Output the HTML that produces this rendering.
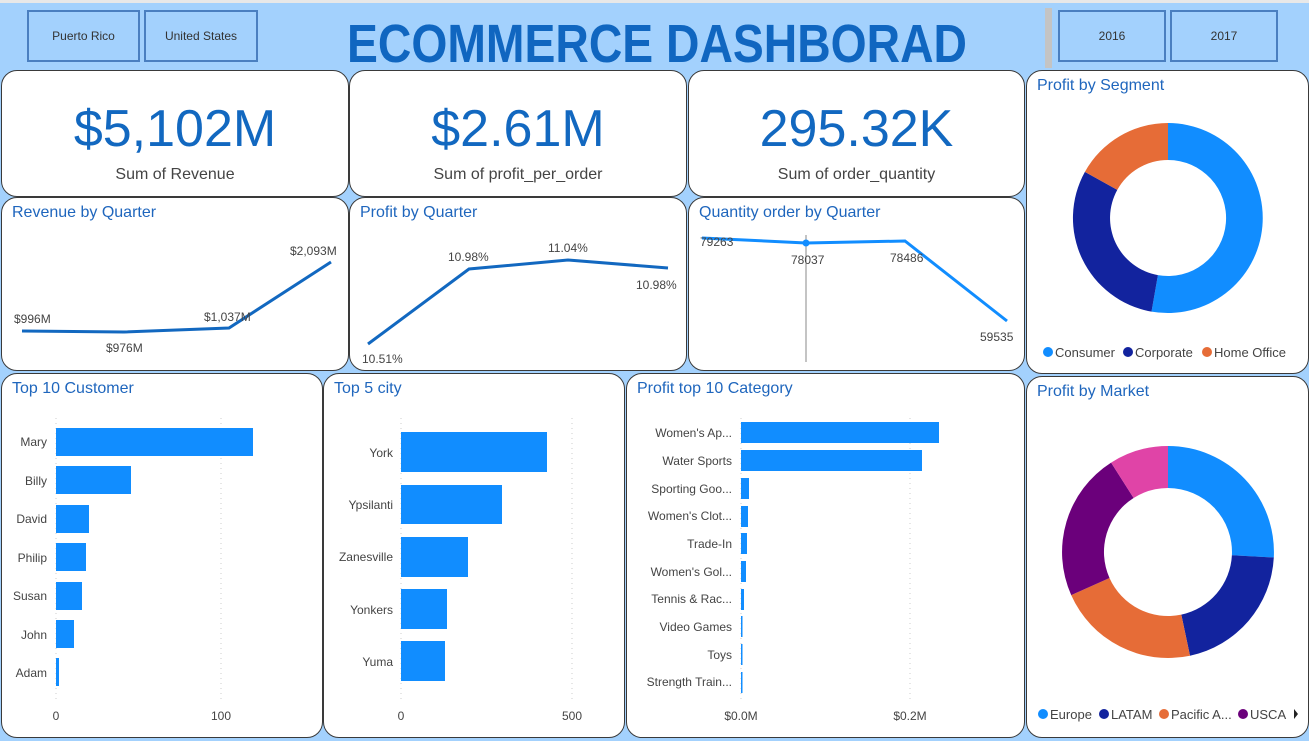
<!DOCTYPE html>
<html><head><meta charset="utf-8"><style>
*{margin:0;padding:0;box-sizing:border-box}
body{width:1309px;height:741px;background:#a3d1fd;font-family:"Liberation Sans",sans-serif;position:relative;overflow:hidden}
.c{position:absolute;background:#fff;border:1px solid #3a3a3a;border-radius:16px}
.sl{position:absolute;border:2px solid #4a7fc0;font-size:12px;color:#333;display:flex;align-items:center;justify-content:center}
.t{position:absolute;font-size:16px;color:#1f66bd;left:10px;top:6px}
.big{position:absolute;width:100%;text-align:center;font-size:52px;color:#1268c0;top:28px}
.lab{position:absolute;width:100%;text-align:center;font-size:16px;color:#444;top:95px}
svg{position:absolute;left:0;top:0}
</style></head><body>
<div style="position:absolute;left:0;top:0;width:1309px;height:3px;background:#e8e8e8"></div>
<div class="sl" style="left:27px;top:10px;width:113px;height:52px">Puerto Rico</div>
<div class="sl" style="left:144px;top:10px;width:114px;height:52px">United States</div>
<div style="position:absolute;left:1045px;top:8px;width:7px;height:60px;background:#c4c4c4"></div>
<div class="sl" style="left:1058px;top:10px;width:108px;height:52px">2016</div>
<div class="sl" style="left:1170px;top:10px;width:108px;height:52px">2017</div>
<svg width="1309" height="741" style="z-index:0">
<text x="657" y="62" text-anchor="middle" font-size="54" font-weight="bold" fill="#1066c0" textLength="620" lengthAdjust="spacingAndGlyphs" font-family="Liberation Sans">ECOMMERCE DASHBORAD</text>
</svg>

<div class="c" style="left:1px;top:70px;width:348px;height:127px"><div class="big">$5,102M</div><div class="lab">Sum of Revenue</div></div>
<div class="c" style="left:349px;top:70px;width:338px;height:127px"><div class="big">$2.61M</div><div class="lab">Sum of profit_per_order</div></div>
<div class="c" style="left:688px;top:70px;width:337px;height:127px"><div class="big">295.32K</div><div class="lab">Sum of order_quantity</div></div>

<div class="c" style="left:1px;top:197px;width:348px;height:174px"><div class="t">Revenue by Quarter</div></div>
<div class="c" style="left:349px;top:197px;width:338px;height:174px"><div class="t">Profit by Quarter</div></div>
<div class="c" style="left:688px;top:197px;width:337px;height:174px"><div class="t">Quantity order by Quarter</div></div>
<div class="c" style="left:1026px;top:70px;width:283px;height:304px"><div class="t">Profit by Segment</div></div>

<div class="c" style="left:1px;top:373px;width:322px;height:365px"><div class="t">Top 10 Customer</div></div>
<div class="c" style="left:323px;top:373px;width:302px;height:365px"><div class="t">Top 5 city</div></div>
<div class="c" style="left:626px;top:373px;width:399px;height:365px"><div class="t">Profit top 10 Category</div></div>
<div class="c" style="left:1026px;top:376px;width:283px;height:362px"><div class="t">Profit by Market</div></div>

<svg width="1309" height="741" font-family="Liberation Sans" font-size="12" fill="#444">
<!-- revenue -->
<polyline points="22,331 124,332 229,328 331,262" fill="none" stroke="#1268c0" stroke-width="3"/>
<text x="14" y="323">$996M</text><text x="106" y="352">$976M</text><text x="204" y="321">$1,037M</text><text x="290" y="255">$2,093M</text>
<!-- profit -->
<polyline points="368,344 469,269 568,260 668,268" fill="none" stroke="#1268c0" stroke-width="3"/>
<text x="362" y="363">10.51%</text><text x="448" y="261">10.98%</text><text x="548" y="252">11.04%</text><text x="636" y="289">10.98%</text>
<!-- quantity -->
<line x1="806" y1="235" x2="806" y2="362" stroke="#888" stroke-width="1"/>
<polyline points="702,238 806,243 905,241 1007,321" fill="none" stroke="#118dff" stroke-width="3"/>
<circle cx="806" cy="243" r="3.5" fill="#118dff"/>
<text x="700" y="246">79263</text><text x="791" y="264">78037</text><text x="890" y="262">78486</text><text x="980" y="341">59535</text>

<!-- segment donut -->
<g transform="translate(1168,218)">
<path d="M0,-95 A95,95 0 1 1 -16.5,93.6 L-10.1,57.1 A58,58 0 1 0 0,-58Z" fill="#118dff"/>
<path d="M-16.5,93.6 A95,95 0 0 1 -83.1,-46.1 L-50.7,-28.1 A58,58 0 0 0 -10.1,57.1Z" fill="#12239e"/>
<path d="M-83.1,-46.1 A95,95 0 0 1 0,-95 L0,-58 A58,58 0 0 0 -50.7,-28.1Z" fill="#e66c37"/>
</g>
<g font-size="13" fill="#444">
<circle cx="1048" cy="352" r="5" fill="#118dff"/><text x="1055" y="357">Consumer</text>
<circle cx="1128" cy="352" r="5" fill="#12239e"/><text x="1135" y="357">Corporate</text>
<circle cx="1207" cy="352" r="5" fill="#e66c37"/><text x="1214" y="357">Home Office</text>
</g>

<!-- market donut -->
<g transform="translate(1168,552)">
<path d="M0,-106 A106,106 0 0 1 105.8,5.5 L63.9,3.3 A64,64 0 0 0 0,-64Z" fill="#118dff"/>
<path d="M105.8,5.5 A106,106 0 0 1 22,103.7 L13.3,62.6 A64,64 0 0 0 63.9,3.3Z" fill="#12239e"/>
<path d="M22,103.7 A106,106 0 0 1 -96.8,43.1 L-58.5,26 A64,64 0 0 0 13.3,62.6Z" fill="#e66c37"/>
<path d="M-96.8,43.1 A106,106 0 0 1 -56.9,-89.4 L-34.4,-54 A64,64 0 0 0 -58.5,26Z" fill="#6b007b"/>
<path d="M-56.9,-89.4 A106,106 0 0 1 0,-106 L0,-64 A64,64 0 0 0 -34.4,-54Z" fill="#e044a7"/>
</g>
<g font-size="13" fill="#444">
<circle cx="1043" cy="714" r="5" fill="#118dff"/><text x="1050" y="719">Europe</text>
<circle cx="1104" cy="714" r="5" fill="#12239e"/><text x="1111" y="719">LATAM</text>
<circle cx="1164" cy="714" r="5" fill="#e66c37"/><text x="1171" y="719">Pacific A...</text>
<circle cx="1243" cy="714" r="5" fill="#6b007b"/><text x="1250" y="719">USCA</text>
<path d="M1294,709 L1298,714 L1294,719Z" fill="#222"/>
</g>

<!-- customers -->
<g stroke="#ccc" stroke-dasharray="1,4"><line x1="56" y1="418" x2="56" y2="700"/><line x1="221" y1="418" x2="221" y2="700"/>
<line x1="401" y1="418" x2="401" y2="700"/><line x1="572" y1="418" x2="572" y2="700"/>
<line x1="741" y1="418" x2="741" y2="700"/><line x1="910" y1="418" x2="910" y2="700"/></g>
<g fill="#118dff">
<rect x="56" y="428" width="197" height="28"/><rect x="56" y="466" width="75" height="28"/><rect x="56" y="505" width="33" height="28"/>
<rect x="56" y="543" width="30" height="28"/><rect x="56" y="582" width="26" height="28"/><rect x="56" y="620" width="18" height="28"/><rect x="56" y="658" width="3" height="28"/>
<rect x="401" y="432" width="146" height="40"/><rect x="401" y="485" width="101" height="39"/><rect x="401" y="537" width="67" height="40"/>
<rect x="401" y="589" width="46" height="40"/><rect x="401" y="641" width="44" height="40"/>
<rect x="741" y="422" width="198" height="21"/><rect x="741" y="450" width="181" height="21"/><rect x="741" y="478" width="8" height="21"/>
<rect x="741" y="506" width="7" height="21"/><rect x="741" y="533" width="6" height="21"/><rect x="741" y="561" width="5" height="21"/>
<rect x="741" y="589" width="3" height="21"/><rect x="741" y="616" width="1.5" height="21"/><rect x="741" y="644" width="1.5" height="21"/><rect x="741" y="672" width="1.5" height="21"/>
</g>
<g text-anchor="end">
<text x="47" y="446">Mary</text><text x="47" y="485">Billy</text><text x="47" y="523">David</text><text x="47" y="562">Philip</text>
<text x="47" y="600">Susan</text><text x="47" y="639">John</text><text x="47" y="677">Adam</text>
<text x="393" y="457">York</text><text x="393" y="509">Ypsilanti</text><text x="393" y="561">Zanesville</text><text x="393" y="614">Yonkers</text><text x="393" y="666">Yuma</text>
<text x="732" y="437">Women's Ap...</text><text x="732" y="465">Water Sports</text><text x="732" y="493">Sporting Goo...</text><text x="732" y="520">Women's Clot...</text>
<text x="732" y="548">Trade-In</text><text x="732" y="576">Women's Gol...</text><text x="732" y="603">Tennis &amp; Rac...</text><text x="732" y="631">Video Games</text>
<text x="732" y="659">Toys</text><text x="732" y="686">Strength Train...</text>
</g>
<g text-anchor="middle">
<text x="56" y="720">0</text><text x="221" y="720">100</text><text x="401" y="720">0</text><text x="572" y="720">500</text>
<text x="741" y="720">$0.0M</text><text x="910" y="720">$0.2M</text>
</g>
</svg>
</body></html>
